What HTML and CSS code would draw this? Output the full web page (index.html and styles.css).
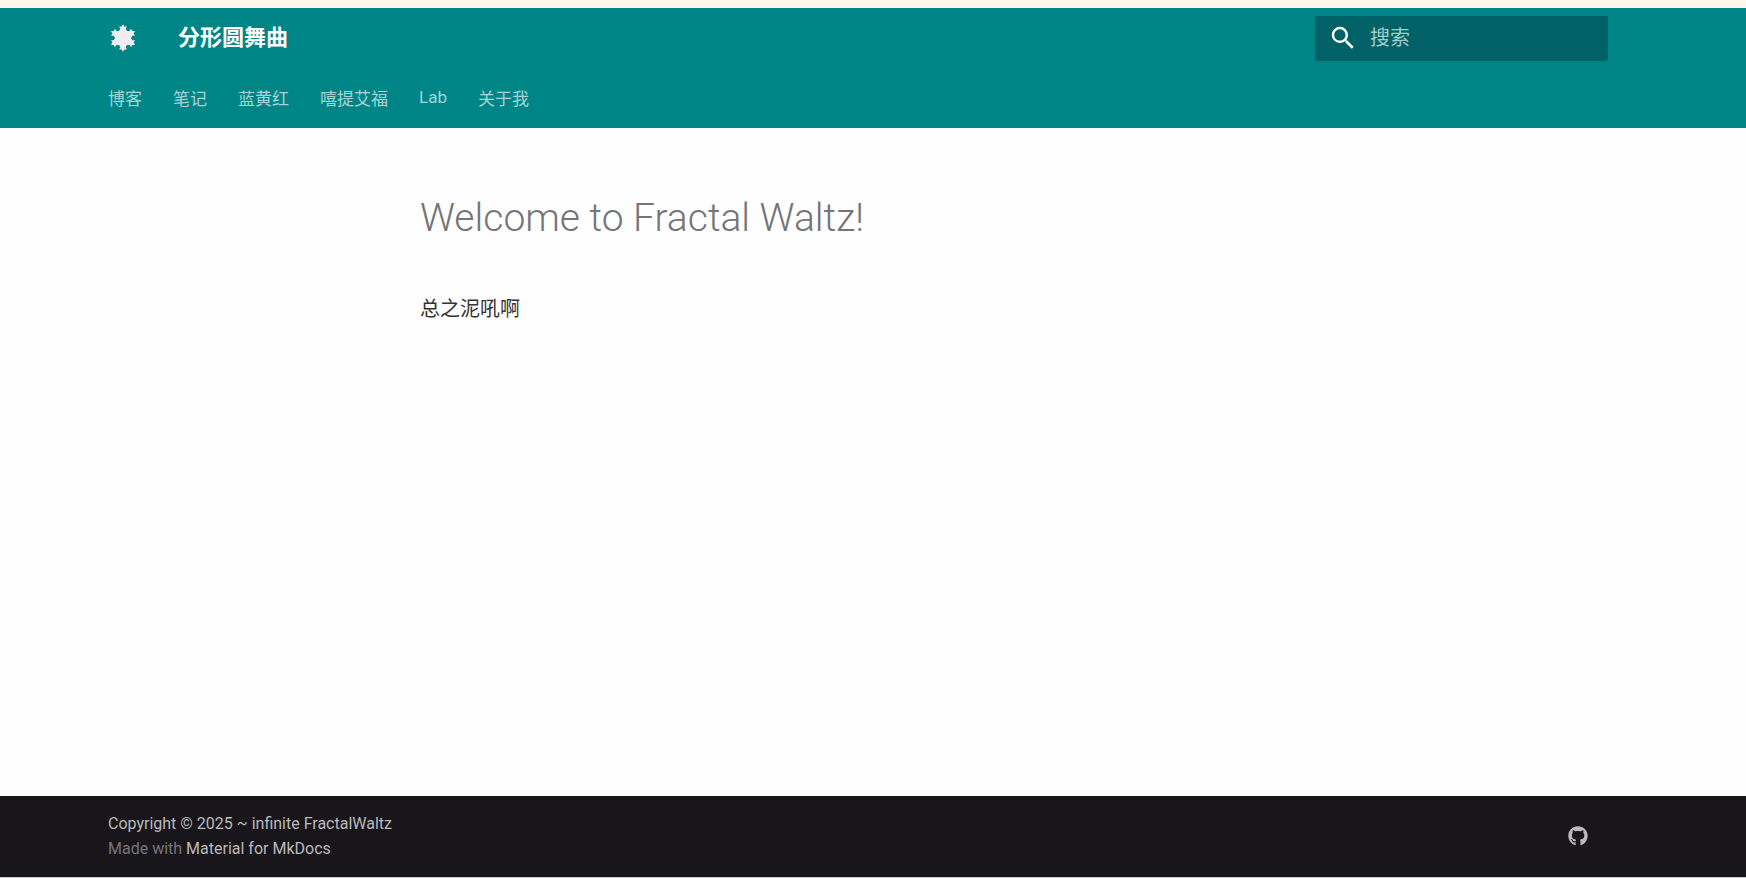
FILE: index.html
```html
<!DOCTYPE html>
<html lang="zh">
<head>
    <meta charset="utf-8">
    <meta name="viewport" content="width=device-width, initial-scale=1">
    <title>分形圆舞曲</title>
    <link rel="stylesheet" href="styles.css">
</head>
<body>
    <header class="header">
        <div class="grid header-inner">
            <a class="logo" href="#" aria-label="分形圆舞曲">
                <!-- Koch snowflake -->
                <svg viewBox="0 0 54 62.4">
                    <path d="M27 0l3 5.2 6 0-3 5.2 3 5.2 6 0 3-5.2 3 5.2 6 0-3 5.2 3 5.2-6 0-3 5.2 3 5.2 6 0-3 5.2 3 5.2-6 0-3 5.2-3-5.2-6 0-3 5.2 3 5.2-6 0-3 5.2-3-5.2-6 0 3-5.2-3-5.2-6 0-3 5.2-3-5.2-6 0 3-5.2-3-5.2 6 0 3-5.2-3-5.2-6 0 3-5.2-3-5.2 6 0 3-5.2 3 5.2 6 0 3-5.2-3-5.2 6 0z"/>
                </svg>
            </a>
            <a class="title" href="#">分形圆舞曲</a>
            <form class="search">
                <label for="query" aria-label="搜索">
                    <svg viewBox="0 0 24 24"><path d="M9.5 3A6.5 6.5 0 0 1 16 9.5c0 1.61-.59 3.09-1.56 4.23l.27.27h.79l5 5-1.5 1.5-5-5v-.79l-.27-.27A6.516 6.516 0 0 1 9.5 16 6.5 6.5 0 0 1 3 9.5 6.5 6.5 0 0 1 9.5 3m0 2C7 5 5 7 5 9.5S7 14 9.5 14 14 12 14 9.5 12 5 9.5 5Z"/></svg>
                </label>
                <input id="query" type="text" placeholder="搜索">
            </form>
        </div>
        <nav class="grid tabs">
            <a href="#">博客</a>
            <a href="#">笔记</a>
            <a href="#">蓝黄红</a>
            <a href="#">嘻提艾福</a>
            <a href="#">Lab</a>
            <a href="#">关于我</a>
        </nav>
    </header>

    <main class="grid main">
        <article class="content">
            <h1>Welcome to Fractal Waltz!</h1>
            <p>总之泥吼啊</p>
        </article>
    </main>

    <footer class="footer">
        <div class="grid footer-inner">
            <div class="copyright">
                <div class="highlight">Copyright © 2025 ~ infinite FractalWaltz</div>
                Made with <a href="#">Material for MkDocs</a>
            </div>
            <a class="social" href="#" aria-label="GitHub">
                <svg viewBox="0 0 496 512"><path d="M165.9 397.4c0 2-2.3 3.6-5.2 3.6-3.3.3-5.6-1.3-5.6-3.6 0-2 2.3-3.6 5.2-3.6 3-.3 5.6 1.3 5.6 3.6zm-31.1-4.5c-.7 2 1.3 4.3 4.3 4.9 2.6 1 5.6 0 6.2-2s-1.3-4.3-4.3-5.2c-2.6-.7-5.5.3-6.2 2.3zm44.2-1.7c-2.9.7-4.9 2.6-4.6 4.9.3 2 2.9 3.3 5.9 2.6 2.9-.7 4.9-2.6 4.6-4.6-.3-1.9-3-3.2-5.9-2.9zM244.8 8C106.1 8 0 113.3 0 252c0 110.9 69.8 205.8 169.5 239.2 12.8 2.3 17.3-5.6 17.3-12.1 0-6.2-.3-40.4-.3-61.4 0 0-70 15-84.7-29.8 0 0-11.4-29.1-27.8-36.6 0 0-22.9-15.7 1.6-15.4 0 0 24.9 2 38.6 25.8 21.9 38.6 58.6 27.5 72.9 20.9 2.3-16 8.8-27.1 16-33.7-55.9-6.2-112.3-14.3-112.3-110.5 0-27.5 7.6-41.3 23.6-58.9-2.6-6.5-11.1-33.3 2.6-67.9 20.9-6.5 69 27 69 27 20-5.6 41.5-8.5 62.8-8.5s42.8 2.9 62.8 8.5c0 0 48.1-33.6 69-27 13.7 34.7 5.2 61.4 2.6 67.9 16 17.7 25.8 31.5 25.8 58.9 0 96.5-58.9 104.2-114.8 110.5 9.2 7.9 17 22.9 17 46.4 0 33.7-.3 75.4-.3 83.6 0 6.5 4.6 14.4 17.3 12.1C428.2 457.8 496 362.9 496 252 496 113.3 383.5 8 244.8 8z"/></svg>
            </a>
        </div>
    </footer>
</body>
</html>
```

FILE: styles.css
```css
* {
    box-sizing: border-box;
}
body {
    margin: 0;
    min-height: 100vh;
    display: flex;
    flex-direction: column;
    background-color: #fefefe;
    border-top: 8px solid #fff6e9;
    border-bottom: 1px solid #c4c9c6;
    font-family: Roboto, "Noto Sans CJK SC", sans-serif;
    font-size: 20px;
    color: #333;
}
a {
    color: inherit;
    text-decoration: none;
}
svg {
    display: block;
    fill: currentColor;
}
.grid {
    width: 100%;
    max-width: 1500px;
    margin: 0 auto;
}

/* Header */
.header {
    padding-right: 30px;
    background-color: #008587;
    color: #fff;
}
.header-inner {
    height: 60px;
    display: flex;
    align-items: center;
}
.logo {
    padding: 0 3px;
    color: #efedf1;
}
.logo svg {
    width: 24px;
    height: 28px;
}
.title {
    margin-left: 40px;
    padding-bottom: 6px;
    font-size: 22px;
    font-weight: 700;
}
.search {
    width: 293px;
    height: 45px;
    margin-left: auto;
    padding-left: 13px;
    display: flex;
    align-items: center;
    gap: 12px;
    background-color: #006266;
    border-radius: 2px;
}
.search svg {
    width: 30px;
    height: 30px;
}
.search input {
    flex: 1;
    min-width: 0;
    padding: 0;
    border: 0;
    outline: 0;
    background: none;
    font: inherit;
    color: #fff;
}
.search input::placeholder {
    color: #a6cbcc;
}
.tabs {
    height: 60px;
    padding-bottom: 2px;
    display: flex;
    align-items: center;
    gap: 31px;
    font-size: 17px;
    color: #a6d4d5;
}

/* Content */
.main {
    flex: 1;
    padding-right: 30px;
    max-width: 1530px;
}
.content {
    padding: 64px 312px 0;
}
h1 {
    margin: 0 0 49px;
    font-size: 39px;
    line-height: 52px;
    font-weight: 300;
    color: #757477;
}
p {
    margin: 0;
    line-height: 32px;
}

/* Footer */
.footer {
    padding-right: 30px;
    background-color: #18161a;
}
.footer-inner {
    height: 81px;
    padding-bottom: 2px;
    display: flex;
    align-items: center;
    justify-content: space-between;
}
.copyright {
    font-size: 16px;
    line-height: 25px;
    color: #777579;
}
.copyright .highlight,
.copyright a {
    color: #bab9bb;
}
.social {
    padding: 0 20px;
    color: #bab9bb;
}
.social svg {
    width: 20px;
    height: 20px;
}
```
